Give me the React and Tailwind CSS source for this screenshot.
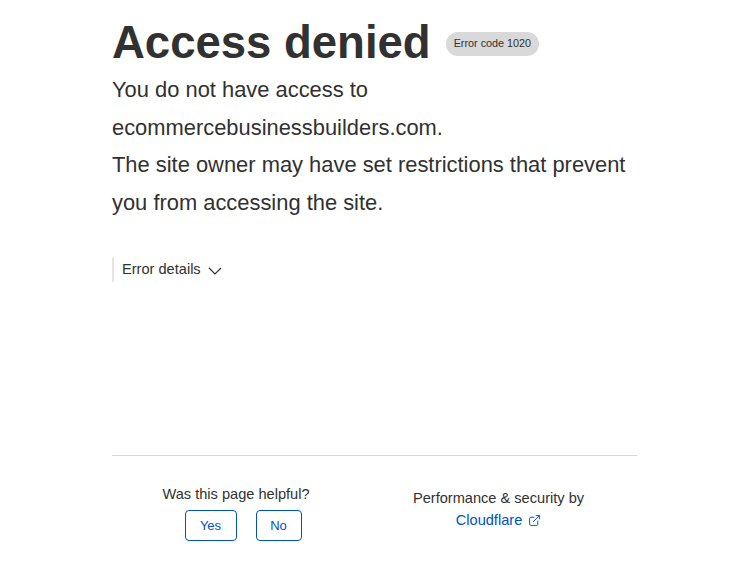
import { ExternalLink } from 'lucide-react'

const App = () => {
  return (
    <div className="min-h-screen bg-white text-[#313131]" style={{ fontFamily: '"Liberation Sans", Arial, sans-serif' }}>
      <div className="w-[525px] ml-[112px] pt-[14px]">
        {/* Heading */}
        <div className="flex items-center">
          <h1 className="text-[45.5px] leading-[58px] font-bold">Access denied</h1>
          <span className="ml-[15px] mt-[1px] bg-[#d9d9d9] rounded-full px-[8px] h-[24px] flex items-center text-[10.8px]">
            Error code 1020
          </span>
        </div>

        <p className="text-[21.9px] leading-[37.5px] mt-[-1px]">
          You do not have access to ecommercebusinessbuilders.com.
          <br />
          The site owner may have set restrictions that prevent you from accessing the site.
        </p>

        {/* Error details */}
        <div className="mt-[37px] border-l-2 border-[#e5e5e5] pl-[8px] h-[24px] flex items-center text-[14.6px]">
          <span>Error details</span>
          <svg className="ml-[7px] mt-[1px]" width="14" height="8" viewBox="0 0 14 8" fill="none">
            <path d="M1 1l6 6 6-6" stroke="#313131" strokeWidth="1.2" />
          </svg>
        </div>
      </div>

      {/* Footer */}
      <div className="w-[525px] ml-[112px] mt-[173px] border-t border-[#d9d9d9]">
        <div className="flex pt-[29px]">
          <div className="w-[248px] flex flex-col items-center">
            <p className="text-[14.6px] leading-[18px]">Was this page helpful?</p>
            <div className="flex gap-[19px] mt-[7px] ml-[14px]">
              <button className="w-[52px] h-[31px] border border-[#0051c3] rounded-[4px] text-[#0051c3] text-[13px]">Yes</button>
              <button className="w-[46px] h-[31px] border border-[#0051c3] rounded-[4px] text-[#0051c3] text-[13px]">No</button>
            </div>
          </div>
          <div className="w-[277px] flex flex-col items-center pt-[4px]">
            <p className="text-[14.6px] leading-[18px]">Performance &amp; security by</p>
            <a className="flex items-center mt-[3px] text-[14.6px] text-[#0051c3]">
              Cloudflare
              <ExternalLink className="ml-[6px] w-[13px] h-[13px]" strokeWidth={1.8} />
            </a>
          </div>
        </div>
      </div>
    </div>
  )
}

export default App
